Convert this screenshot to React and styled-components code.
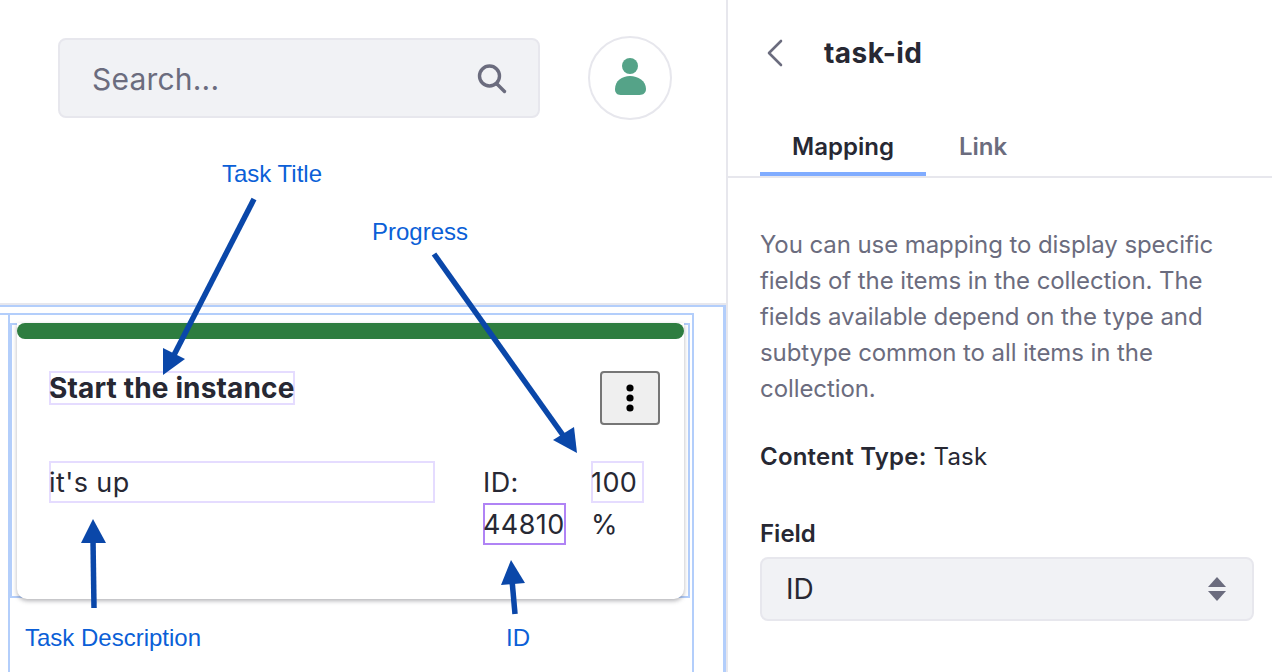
import styled, { createGlobalStyle } from "styled-components"

const GlobalStyle = createGlobalStyle`
  html, body {
    margin: 0;
    padding: 0;
    background: #fff;
    overflow: hidden;
  }
  * {
    box-sizing: border-box;
  }
`

const Page = styled.div`
  position: relative;
  display: grid;
  grid-template-columns: 726px 1fr;
  width: 1272px;
  height: 672px;
  overflow: hidden;
  font-family: Inter, "Liberation Sans", sans-serif;
  color: #272833;
`

/* left side */
const LeftColumn = styled.div`
  display: flex;
  flex-direction: column;
  height: 672px;
`

const TopBar = styled.div`
  display: flex;
  align-items: center;
  gap: 48px;
  height: 303px;
  padding: 36px 0 183px 58px;
`

const SearchBox = styled.div`
  display: flex;
  align-items: center;
  justify-content: space-between;
  width: 482px;
  height: 80px;
  padding: 2px 31px 0 32px;
  background: #f1f2f5;
  border: 2px solid #e7e7ed;
  border-radius: 8px;
  font-size: 30px;
  letter-spacing: 0.2px;
  color: #6b6c7e;
`

const Avatar = styled.div`
  display: flex;
  align-items: center;
  justify-content: center;
  width: 84px;
  height: 84px;
  padding-bottom: 2px;
  border: 2px solid #e7e7ed;
  border-radius: 50%;
`

const Canvas = styled.div`
  flex: 1;
  border-top: 2px solid #e7e7ed;
`

const Fragment = styled.div`
  height: 100%;
  padding-top: 6px;
  border-top: 2px solid #b3cefb;
  border-right: 3px solid #b3cefb;
`

const Section = styled.div`
  width: 694px;
  height: 100%;
  border-top: 2px solid #b3cefb;
`

const SectionInner = styled.div`
  height: 100%;
  margin-left: 8px;
  padding: 8px 2px 0 0;
  border-left: 2px solid #b3cefb;
  border-right: 2px solid #b3cefb;
`

const CardSlot = styled.div`
  height: 275px;
  padding: 0 4px 0 5px;
  border: 2px solid #b3cefb;
`

const Card = styled.div`
  height: 276px;
  margin-top: -2px;
  background: #fff;
  border-radius: 0 0 10px 10px;
  box-shadow: 0 2px 4px rgba(39, 40, 51, 0.35);
`

const ProgressBar = styled.div`
  height: 16px;
  background: #2e7d40;
  border-radius: 8px;
`

const CardBody = styled.div`
  padding: 32px 24px 0 32px;
`

const TitleRow = styled.div`
  display: flex;
  justify-content: space-between;
  align-items: flex-start;
  height: 90px;
`

const FieldBox = styled.div`
  box-shadow: inset 0 0 0 2px ${(props) => (props.$active ? "#b083f5" : "#e5dcff")};
  width: ${(props) => props.$width};
  height: 42px;
  line-height: 44px;
  font-size: 27px;
  white-space: nowrap;
  letter-spacing: 0.4px;
`

const CardTitle = styled(FieldBox)`
  height: 34px;
  font-size: 28px;
  font-weight: 700;
  line-height: 35px;
  letter-spacing: 0.15px;
`

const MenuButton = styled.div`
  display: flex;
  align-items: center;
  justify-content: center;
  width: 60px;
  height: 54px;
  background: #efefef;
  border: 2px solid #767676;
  border-radius: 4px;
`

const InfoRow = styled.div`
  display: grid;
  grid-template-columns: 434px 108px 60px;
`

const PlainLine = styled.div`
  height: 42px;
  line-height: 44px;
  font-size: 27px;
  letter-spacing: 0.4px;
  white-space: nowrap;
`

/* annotations, they sit over the page */
const Annotations = styled.svg`
  position: absolute;
  left: 0;
  top: 0;
  pointer-events: none;
`

const Label = styled.div`
  position: absolute;
  left: ${(props) => props.$x}px;
  top: ${(props) => props.$y}px;
  font-family: "Liberation Sans", Arial, sans-serif;
  font-size: 24px;
  line-height: 28px;
  color: #0b5fd7;
  white-space: nowrap;
`

/* right side */
const SidePanel = styled.div`
  display: flex;
  flex-direction: column;
  height: 672px;
  border-left: 2px solid #e7e7ed;
`

const PanelHeader = styled.div`
  display: flex;
  align-items: center;
  gap: 40px;
  height: 106px;
  padding-left: 38px;
  font-size: 28px;
  font-weight: 700;
  letter-spacing: 0.45px;
`

const Tabs = styled.div`
  display: flex;
  height: 72px;
  padding-left: 32px;
  border-bottom: 2px solid #e7e7ed;
`

const Tab = styled.div`
  display: flex;
  align-items: flex-end;
  justify-content: center;
  width: ${(props) => (props.$active ? "166px" : "114px")};
  height: 70px;
  padding-bottom: 10px;
  font-size: 24px;
  line-height: 30px;
  font-weight: 600;
  color: ${(props) => (props.$active ? "#272833" : "#6b6c7e")};
  border-bottom: 4px solid ${(props) => (props.$active ? "#80acff" : "transparent")};
`

const PanelBody = styled.div`
  padding: 49px 18px 0 32px;
`

const HelpText = styled.p`
  margin: 0 0 32px;
  font-size: 24px;
  line-height: 36px;
  color: #6b6c7e;
  letter-spacing: -0.08px;
`

const ContentType = styled.div`
  margin-bottom: 44px;
  font-size: 24px;
  line-height: 36px;
  letter-spacing: 0.2px;
  b {
    font-weight: 600;
  }
`

const FieldLabel = styled.div`
  margin-bottom: 8px;
  font-size: 24px;
  line-height: 30px;
  font-weight: 600;
`

const SelectBox = styled.div`
  display: flex;
  align-items: center;
  justify-content: space-between;
  height: 64px;
  padding: 0 26px 0 24px;
  background: #f1f2f5;
  border: 2px solid #e7e7ed;
  border-radius: 8px;
  font-size: 28px;
`

export default function App() {
  return (
    <Page>
      <GlobalStyle />
      <LeftColumn>
        <TopBar>
          <SearchBox>
            Search...
            <svg width="30" height="30" viewBox="0 0 30 30" fill="none" stroke="#6b6c7e" strokeWidth="3.4" strokeLinecap="round">
              <circle cx="12.5" cy="12" r="10" />
              <path d="M20 20 L27.5 27.5" />
            </svg>
          </SearchBox>
          <Avatar>
            <svg width="32" height="38" viewBox="0 0 32 38" fill="#55a388">
              <ellipse cx="16" cy="8" rx="8" ry="8" />
              <path d="M16 18 C 8 18 1 23 1 31 C 1 36 4 37 8 37 L 24 37 C 28 37 32 36 32 31 C 32 23 24 18 16 18 Z" />
            </svg>
          </Avatar>
        </TopBar>
        <Canvas>
          <Fragment>
            <Section>
              <SectionInner>
                <CardSlot>
                  <Card>
                    <ProgressBar />
                    <CardBody>
                      <TitleRow>
                        <CardTitle $width="246px">Start the instance</CardTitle>
                        <MenuButton>
                          <svg width="10" height="30" viewBox="0 0 10 30" fill="#000">
                            <circle cx="5" cy="5" r="3.6" />
                            <circle cx="5" cy="15" r="3.6" />
                            <circle cx="5" cy="25" r="3.6" />
                          </svg>
                        </MenuButton>
                      </TitleRow>
                      <InfoRow>
                        <FieldBox $width="386px">it's up</FieldBox>
                        <div>
                          <PlainLine>ID:</PlainLine>
                          <FieldBox $active $width="83px">44810</FieldBox>
                        </div>
                        <div>
                          <FieldBox $width="53px">100</FieldBox>
                          <PlainLine>%</PlainLine>
                        </div>
                      </InfoRow>
                    </CardBody>
                  </Card>
                </CardSlot>
              </SectionInner>
            </Section>
          </Fragment>
        </Canvas>
      </LeftColumn>

      <SidePanel>
        <PanelHeader>
          <svg width="18" height="28" viewBox="0 0 18 28" fill="none" stroke="#6b6c7e" strokeWidth="2.6" strokeLinecap="round" strokeLinejoin="round">
            <path d="M15 2 L3 14 L15 26" />
          </svg>
          task-id
        </PanelHeader>
        <Tabs>
          <Tab $active>Mapping</Tab>
          <Tab>Link</Tab>
        </Tabs>
        <PanelBody>
          <HelpText>
            You can use mapping to display specific
            <br />fields of the items in the collection. The
            <br />fields available depend on the type and
            <br />subtype common to all items in the
            <br />collection.
          </HelpText>
          <ContentType><b>Content Type:</b> Task</ContentType>
          <FieldLabel>Field</FieldLabel>
          <SelectBox>
            ID
            <svg width="18" height="24" viewBox="0 0 18 24" fill="#6b6c7e">
              <path d="M9 0 L18 10 L0 10 Z" />
              <path d="M0 14 L18 14 L9 24 Z" />
            </svg>
          </SelectBox>
        </PanelBody>
      </SidePanel>

      <Annotations width="1272" height="672" viewBox="0 0 1272 672" fill="#0a47a9" stroke="none">
        <g stroke="#0a47a9" strokeWidth="5.5" fill="none">
          <path d="M254 199 L174 355" />
          <path d="M434 254 L565 438" />
          <path d="M94 608 L93 540" />
          <path d="M515 614 L512 580" />
        </g>
        <polygon points="163,375 163,348 185,359" />
        <polygon points="577,453 553,440 574,427" />
        <polygon points="93,519 81,543 106,543" />
        <polygon points="511,560 501,585 525,583" />
      </Annotations>
      <Label $x={222} $y={160}>Task Title</Label>
      <Label $x={372} $y={218}>Progress</Label>
      <Label $x={25} $y={624}>Task Description</Label>
      <Label $x={506} $y={624}>ID</Label>
    </Page>
  )
}
